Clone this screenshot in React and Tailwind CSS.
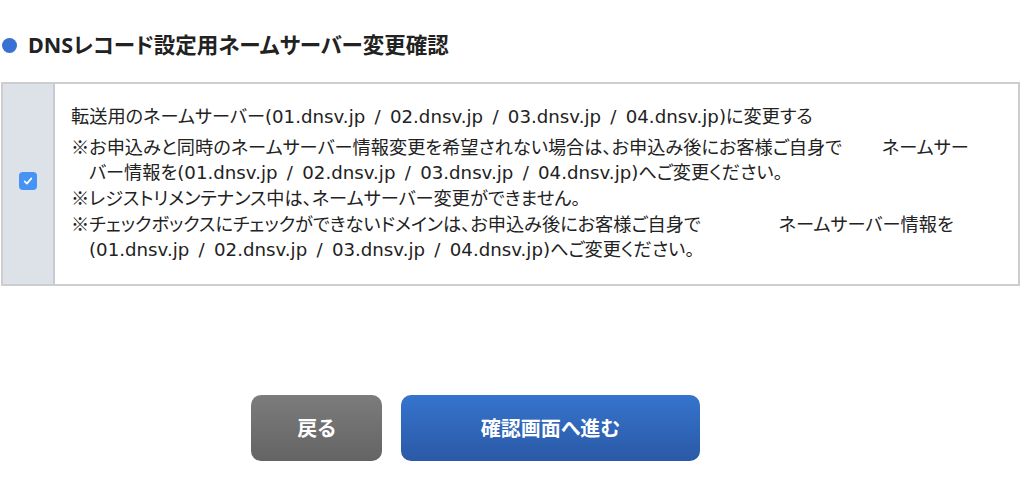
import React from 'react';

const bodyFont = { fontFamily: '"DejaVu Sans", "Noto Sans CJK JP", sans-serif' };
const cjk = { fontFamily: '"Noto Sans CJK JP", sans-serif' };

const Kome = () => <span style={cjk}>※</span>;
const Gap = ({ w }) => <span className="inline-block" style={{ width: w }} />;

const servers = '(01.dnsv.jp / 02.dnsv.jp / 03.dnsv.jp / 04.dnsv.jp)';

export default function App() {
  const [checked, setChecked] = React.useState(true);

  return (
    <div className="w-[1024px] h-[502px] bg-white text-[#222] [font-feature-settings:'palt']">
      {/* Heading */}
      <div className="flex items-center pt-[30px] pl-[2px]">
        <span className="w-[15px] h-[15px] rounded-full bg-[#3a6fd4]" />
        <h2
          className="ml-[11px] text-[21.5px] leading-[30px] font-bold"
          style={{ fontFamily: '"Noto Sans", "Noto Sans CJK JP", sans-serif' }}
        >
          DNSレコード設定用ネームサーバー変更確認
        </h2>
      </div>

      {/* Option row */}
      <div className="mt-[22px] ml-px w-[1019px] flex border-2 border-[#cdcdcd]">
        <div className="w-[52px] shrink-0 bg-[#dde1e8] border-r-2 border-[#c6cad1] flex items-center justify-center">
          <button
            type="button"
            onClick={() => setChecked(!checked)}
            className={`w-[18px] h-[18px] rounded-[4px] flex items-center justify-center -mt-[6px] ${checked ? 'bg-[#4593f5]' : 'bg-white border border-gray-400'}`}
          >
            {checked && (
              <svg viewBox="0 0 16 16" className="w-[12px] h-[12px]" fill="none" stroke="white" strokeWidth="2.2" strokeLinecap="round" strokeLinejoin="round">
                <path d="M3.5 8.5l3 3 6-7" />
              </svg>
            )}
          </button>
        </div>
        <div className="pl-[16px] pt-[20px] pb-[22px] text-[18.2px] leading-[25px] whitespace-nowrap [word-spacing:3.5px]" style={bodyFont}>
          <p className="mb-[5px]">転送用のネームサーバー{servers}に変更する</p>
          <p className="pl-[18px] -indent-[18px]">
            <Kome />お申込みと同時のネームサーバー情報変更を希望されない場合は、お申込み後にお客様ご自身で<Gap w={40} />ネームサー
            <br />バー情報を{servers}へご変更ください。
          </p>
          <p className="pl-[18px] -indent-[18px]">
            <Kome />レジストリメンテナンス中は、ネームサーバー変更ができません。
          </p>
          <p className="pl-[18px] -indent-[18px]">
            <Kome />チェックボックスにチェックができないドメインは、お申込み後にお客様ご自身で<Gap w={78} />ネームサーバー情報を
            <br />{servers}へご変更ください。
          </p>
        </div>
      </div>

      {/* Buttons */}
      <div className="flex gap-[19px] pl-[251px] mt-[109px]">
        <button
          type="button"
          className="w-[131px] h-[66px] rounded-[10px] bg-gradient-to-b from-[#7c7c7c] to-[#646464] text-white text-[20px] font-bold"
          style={cjk}
        >
          戻る
        </button>
        <button
          type="button"
          className="w-[299px] h-[66px] rounded-[10px] bg-gradient-to-b from-[#3574cd] to-[#2b59a6] text-white text-[20px] font-bold"
          style={cjk}
        >
          確認画面へ進む
        </button>
      </div>
    </div>
  );
}
